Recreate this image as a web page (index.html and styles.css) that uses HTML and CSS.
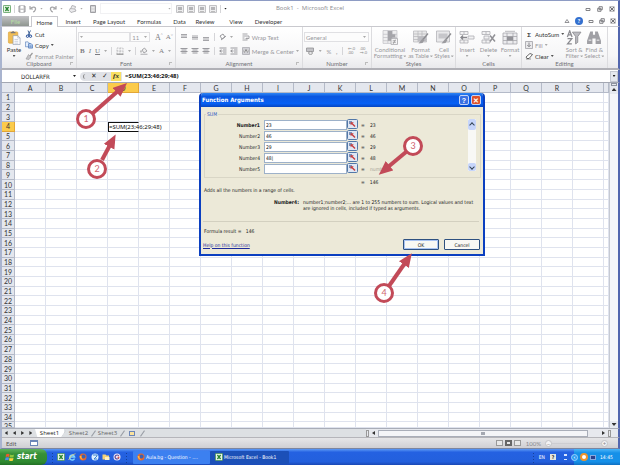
FILE: index.html
```html
<!DOCTYPE html>
<html lang="en">
<head>
<meta charset="utf-8">
<title>Book1 - Microsoft Excel</title>
<link rel="stylesheet" href="styles.css">
</head>
<body>
<svg class="sprite" aria-hidden="true">
  <symbol id="excel" viewBox="0 0 10 10"><rect x=".5" y=".5" width="9" height="9" rx="1" fill="#e9f6e6" stroke="#47934b"/><path d="M3 2.5l4 5M7 2.5l-4 5" stroke="#27832f" stroke-width="1.6"/></symbol>
  <symbol id="save" viewBox="0 0 8 8"><path d="M1 1h6v6H1z" fill="#c9c9cb" stroke="#96969a"/><path d="M2.5 1h3v2.500h-3zM2.500 5h3v2h-3z" fill="#fff"/></symbol>
  <symbol id="undo" viewBox="0 0 8 8"><path d="M1 1v3h3M1.500 3.500C4 1 7 2 6.500 4.500 6 6 5 7 4 7" fill="none" stroke="#a5a5a8" stroke-width="1.200"/></symbol>
  <symbol id="redo" viewBox="0 0 8 8"><path d="M7 1v3H4M6.500 3.500C4 1 1 2 1.500 4.500 2 6 3 7 4 7" fill="none" stroke="#a5a5a8" stroke-width="1.200"/></symbol>
  <symbol id="printer" viewBox="0 0 8 8"><path d="M2 3l1-2.500 3.500 1L6 3.500M1 3.500l5 .500 1 2-5 1.500-1.500-2z" fill="#ececee" stroke="#a5a5a8" stroke-width=".8"/></symbol>
  <symbol id="page" viewBox="0 0 8 8"><path d="M1.500.5h5v7h-5z" fill="#cfcfd2" stroke="#a0a0a4"/><path d="M2.500 2.500h3M2.500 4h3M2.500 5.500h3" stroke="#f4f4f4" stroke-width=".7"/></symbol>
  <symbol id="panes" viewBox="0 0 8 8"><path d="M.5.5h7v7h-7z" fill="#ededee" stroke="#c2c2c5"/><path d="M2 2h4v3H2z" fill="#b4b4b7"/><path d="M2 6.500h4" stroke="#bbb"/></symbol>
  <symbol id="paste" viewBox="0 0 14 16"><rect x="1" y="2" width="10" height="12" rx="1" fill="#f0bd55" stroke="#dba23d" stroke-width=".7"/><path d="M3.500 3.500V2h1.500q1-2 2 0h1.500v1.500z" fill="#78777a"/><path d="M6 6h5l2.500 2.500V15.500H6z" fill="#fff" stroke="#8e9bb0" stroke-width=".7"/><path d="M11 6v2.500h2.500M7.500 10h4M7.500 12h4M7.500 14h4" fill="none" stroke="#9eacc2" stroke-width=".6"/></symbol>
  <symbol id="cut" viewBox="0 0 8 8"><path d="M5.500.5L3 5.500M3 .5l2 5" stroke="#47689a" stroke-width="1" fill="none"/><circle cx="2.500" cy="6.200" r="1.200" fill="none" stroke="#254f9b"/><circle cx="5.500" cy="6.200" r="1.200" fill="none" stroke="#254f9b"/></symbol>
  <symbol id="copy" viewBox="0 0 9 8"><path d="M.5.5h3l1.500 1.500v4H.5z" fill="#e4eefc" stroke="#5179b5" stroke-width=".7"/><path d="M4 2.500h3l1.500 1.500v3.500H4z" fill="#c5daf6" stroke="#2b5ca8" stroke-width=".7"/><path d="M5 5h2.500M5 6.200h2.500" stroke="#2b5ca8" stroke-width=".6"/></symbol>
  <symbol id="brush" viewBox="0 0 8 8"><path d="M7.500 1L5 4" stroke="#999" stroke-width="1.200"/><path d="M3.500 2.500l2.500 2.500-2 2.500-3-.5z" fill="#c3c3c6" stroke="#98989b" stroke-width=".6"/></symbol>
  <symbol id="border" viewBox="0 0 8 8"><path d="M1 1h6v6H1zM4 1v6M1 4h6" fill="none" stroke="#aaaaae" stroke-width=".7" stroke-dasharray="1 .5"/><path d="M.5 7.200h7" stroke="#888"/></symbol>
  <symbol id="bucket" viewBox="0 0 8 8"><path d="M2 3l2.500-2 2.500 3-3 2z" fill="#eee" stroke="#929296" stroke-width=".8"/><path d="M1 3.500v2" stroke="#888"/><path d="M.5 7.300h7" stroke="#bdbdc0" stroke-width="1.300"/></symbol>
  <symbol id="lines" viewBox="0 0 8 8"><path d="M.5 1.500h7M1.500 3h5M.5 4.500h7M1.500 6h5" stroke="#8f8f94" stroke-width=".9"/></symbol>
  <symbol id="lines-top" viewBox="0 0 8 8"><path d="M1 1.500h6M1 3h6M1 4.500h6" stroke="#8f8f94" stroke-width=".8"/></symbol>
  <symbol id="lines-mid" viewBox="0 0 8 8"><path d="M1 3h6M1 4.500h6M1 6h6" stroke="#8f8f94" stroke-width=".8"/></symbol>
  <symbol id="lines-low" viewBox="0 0 8 8"><path d="M1 4.500h6M1 6h6M1 7.500h6" stroke="#8f8f94" stroke-width=".8"/></symbol>
  <symbol id="indent" viewBox="0 0 8 8"><path d="M.5 1h7M4 3h3.500M4 5h3.500M.5 7h7" stroke="#8f8f94" stroke-width=".9"/><path d="M3.500 4H1M2.200 2.500L.7 4l1.500 1.500" fill="none" stroke="#77777c" stroke-width=".8"/></symbol>
  <symbol id="rotate" viewBox="0 0 8 8"><path d="M1 3l3-2 2 3-3 2zM2 7l5-4" fill="none" stroke="#9a9a9e" stroke-width="1"/></symbol>
  <symbol id="wrap" viewBox="0 0 8 8"><path d="M.5 1h5M.5 3h6.500v2.500H4M.5 5h2M.5 7h5M5 4.500L4 5.500l1 1" fill="none" stroke="#9a9a9e" stroke-width=".9"/></symbol>
  <symbol id="merge" viewBox="0 0 8 8"><path d="M.5.5h7v7h-7zM.5 2h7M.5 6h7" fill="#ececee" stroke="#aaaab0" stroke-width=".8"/><path d="M2.500 5.500L4 2.500l1.500 3M1 4h1.500M5.500 4H7" fill="none" stroke="#777" stroke-width=".8"/></symbol>
  <symbol id="money" viewBox="0 0 8 8"><path d="M.5 1h7v3.500h-7z" fill="#c3c3c7" stroke="#929296" stroke-width=".8"/><ellipse cx="4.500" cy="6" rx="2" ry="1.500" fill="#e4e4e6" stroke="#888" stroke-width=".7"/></symbol>
  <symbol id="cond" viewBox="0 0 14 14"><path d="M.5.5h13v12H.5zM.5 4h13M.5 7h13M.5 10h13M5 .5v12M9 .5v12" fill="#efeff0" stroke="#c1c1c6" stroke-width=".7"/><path d="M5 1h4v3h3v3H9v3H5z" fill="#a5a5aa"/><path d="M8 8h6v5.500H8z" fill="#f6f6f7" stroke="#a4a4a8" stroke-width=".7"/><path d="M9.500 10h3M9.500 11.500h3M12 9l-2 4" stroke="#88888c" stroke-width=".6"/></symbol>
  <symbol id="fmt-table" viewBox="0 0 16 14"><path d="M.5.5h13v11H.5zM.5 3.500h13M.5 6h13M.5 9h13M5 .5v11M9 .5v11" fill="#e8e8e9" stroke="#b4b4b9" stroke-width=".7"/><path d="M5 6h8v5H5z" fill="#bcbcc1"/><path d="M15 3l-5 6" stroke="#8c8c90" stroke-width="1.300"/><path d="M9.500 8l2 1.500-2 3-4 .5z" fill="#9b9b9f"/></symbol>
  <symbol id="cell-style" viewBox="0 0 16 14"><path d="M.5.5h13v11H.5z" fill="#e9e9eb" stroke="#b4b4b9" stroke-width=".8"/><path d="M2.500 3h9v5h-9z" fill="#c6c6ca"/><path d="M15 3l-5 6" stroke="#8c8c90" stroke-width="1.300"/><path d="M9.500 8l2 1.500-2 3-4 .5z" fill="#9b9b9f"/></symbol>
  <symbol id="insert" viewBox="0 0 16 14"><path d="M1 1h8v3H1zM1 9.500h8v3H1zM5 1v3M5 9.500v3M9 5.500h6v3H9z" fill="#f2f2f3" stroke="#adadb2" stroke-width=".8"/><path d="M8 7H2M4 5L2 7l2 2" fill="none" stroke="#88888d" stroke-width="1.400"/></symbol>
  <symbol id="delete" viewBox="0 0 16 14"><path d="M1 1h8v3H1zM1 9.500h8v3H1zM5 1v3M5 9.500v3M3 5.500h5v3H3z" fill="#f2f2f3" stroke="#adadb2" stroke-width=".8"/><path d="M9 5l5 6M14 4l-5 7" stroke="#919196" stroke-width="1.500"/></symbol>
  <symbol id="format" viewBox="0 0 16 14"><path d="M1 2.500h14v11H1zM1 6h14M1 10h14M5 2.500v11M11 2.500v11M3 .8h10" fill="#ececee" stroke="#a7a7ac" stroke-width=".8"/><path d="M5 6h6v4H5z" fill="#929297"/></symbol>
  <symbol id="fill" viewBox="0 0 8 8"><path d="M.5.5h7v7h-7z" fill="#e9e9eb" stroke="#a2a2a7" stroke-width=".8"/><path d="M4 1.500v4M2.300 4L4 5.800 5.700 4" fill="none" stroke="#8a8a8f"/></symbol>
  <symbol id="eraser" viewBox="0 0 8 8"><path d="M1 5l4-3.500 2.500 1L4 6.500H2z" fill="#fff" stroke="#444" stroke-width=".8"/><path d="M1 7h5" stroke="#555" stroke-width=".6"/></symbol>
  <symbol id="sort" viewBox="0 0 14 14"><path d="M.8 6.500L3 .8l2.200 5.700M1.500 4.500h3M1 8h4L1 13h4" fill="none" stroke="#8b8b90" stroke-width="1.200"/><path d="M5.500 2h8L10.500 6v5.500l-2 1.500V6z" fill="#bdbdc2" stroke="#8b8b90" stroke-width=".8"/></symbol>
  <symbol id="find" viewBox="0 0 14 14"><path d="M3.500 1.500h2.500v3h2v-3h2.500l3 8.500v3H8.500V8h-3v5H.5v-3z" fill="#a0a0a5"/><path d="M2 9.500h2.500M9.500 9.500H12" stroke="#d7d7da" stroke-width="1.500"/></symbol>
  <symbol id="min" viewBox="0 0 6 6"><path d="M1 2.500h4v2H1z" fill="#fff" stroke="#77777c" stroke-width=".9"/></symbol>
  <symbol id="restore" viewBox="0 0 6 6"><path d="M2 .7h3.300v3H2zM.7 2.300H4v3H.7z" fill="#fff" stroke="#77777c" stroke-width=".9"/></symbol>
  <symbol id="close" viewBox="0 0 6 6"><path d="M.7.7h4.600v4.600H.7z" fill="#eee" stroke="#88888c" stroke-width=".6"/><path d="M1 1l4 4M5 1L1 5" stroke="#737378"/></symbol>
  <symbol id="caret-up" viewBox="0 0 6 6"><path d="M1 4.500l2-3 2 3z" fill="#fff" stroke="#77777c" stroke-width=".8"/></symbol>
  <symbol id="ref" viewBox="0 0 11 11"><rect x=".5" y=".5" width="10" height="9" rx="1" fill="#dfe7f4" stroke="#5278a8"/><path d="M2 2h3v3H2z" fill="#7c92b9"/><path d="M8 7.500L5 4.500" fill="none" stroke="#c83c3c" stroke-width="1.400"/><path d="M3.500 3.200h3.300L3.700 6.300z" fill="#c83c3c"/></symbol>
  <symbol id="win" viewBox="0 0 10 9"><path d="M1 1.500q2-1.500 3.500-.2L4 4Q2.500 3 .7 4z" fill="#ee5a30"/><path d="M5 1.500q2 1.200 4 0L8.500 4Q6.500 5 4.600 4z" fill="#8cc63f"/><path d="M.6 4.600Q2.500 3.700 4 4.600L3.500 7.300Q2 6.500 0 7.300z" fill="#4e8fea"/><path d="M4.500 4.700q2 1 4 0L8 7.500q-2 1-4 0z" fill="#fbd038"/></symbol>
  <symbol id="ie" viewBox="0 0 8 8"><path d="M6.500 5.500A2.500 2.500 0 1 1 6.600 4H2.500" fill="none" stroke="#7fd2ff" stroke-width="1.500"/><path d="M.5 7Q3 1 7.500.7" fill="none" stroke="#f6d86d" stroke-width=".7"/></symbol>
  <symbol id="fox" viewBox="0 0 8 8"><circle cx="4" cy="4" r="3.500" fill="#e8672a"/><circle cx="4.500" cy="3.500" r="2" fill="#3b62b4"/><path d="M.6 3q.5 4 4 3.800Q2 6 2.500 3z" fill="#ffb83e"/></symbol>
  <symbol id="globe" viewBox="0 0 8 8"><circle cx="4" cy="4" r="3.500" fill="#dbefff"/><path d="M2 2h4v1L3 6h3" fill="none" stroke="#3e83cf"/></symbol>
  <symbol id="folder" viewBox="0 0 8 8"><path d="M.5 1.500h3l1 1h2.500v4H.5z" fill="#f4d377"/><path d="M3 4h4.500v3H3z" fill="#fff1c0"/></symbol>
  <symbol id="chrome" viewBox="0 0 8 8"><circle cx="4" cy="4" r="3.500" fill="#eee9f8"/><path d="M5.800 3a2 2 0 1 0 0 2" fill="none" stroke="#5b4c9a" stroke-width="1.200"/><circle cx="5.500" cy="4.500" r="1" fill="#de5546"/></symbol>
</svg>

<div class="screen">
  <header class="titlebar">
    <svg class="i8"><use href="#excel"/></svg><i class="vbar"></i>
    <svg class="i8"><use href="#save"/></svg>
    <svg class="i8"><use href="#undo"/></svg><i class="dd"></i>
    <svg class="i8"><use href="#redo"/></svg><i class="dd"></i>
    <svg class="i8"><use href="#printer"/></svg><i class="dd"></i>
    <svg class="i8"><use href="#page"/></svg>
    <span class="quickbox"><i class="dd"></i></span>
    <svg class="i8"><use href="#panes"/></svg><svg class="i8"><use href="#panes"/></svg><svg class="i8"><use href="#panes"/></svg><svg class="i8"><use href="#panes"/></svg>
    <i class="vbar"></i><i class="dd dark"></i>
    <h1 class="wintitle">Book1 &nbsp;-&nbsp; Microsoft Excel</h1>
    <span class="winbtns"><svg class="i6"><use href="#min"/></svg><svg class="i6"><use href="#restore"/></svg><svg class="i6"><use href="#close"/></svg></span>
  </header>

  <nav class="tabs">
    <button class="tab file">File</button>
    <button class="tab home">Home</button>
    <button class="tab t-insert">Insert</button>
    <button class="tab t-page">Page Layout</button>
    <button class="tab t-form">Formulas</button>
    <button class="tab t-data">Data</button>
    <button class="tab t-review">Review</button>
    <button class="tab t-view">View</button>
    <button class="tab t-dev">Developer</button>
    <span class="docbtns"><svg class="i6"><use href="#caret-up"/></svg><b class="help">?</b><svg class="i6"><use href="#min"/></svg><svg class="i6"><use href="#restore"/></svg><svg class="i6"><use href="#close"/></svg></span>
  </nav>

  <section class="ribbon">
    <div class="group g-clip">
      <div class="tools">
        <button class="big live paste"><svg class="i16"><use href="#paste"/></svg>Paste<i class="dd"></i></button>
        <div class="stack">
          <button class="small live"><svg class="i8"><use href="#cut"/></svg>Cut</button>
          <button class="small live"><svg class="i8"><use href="#copy"/></svg>Copy<i class="dd"></i></button>
          <button class="small"><svg class="i8"><use href="#brush"/></svg>Format Painter</button>
        </div>
      </div>
      <div class="caption">Clipboard<i class="launch"></i></div>
    </div>
    <div class="group g-font">
      <div class="tools rows">
        <div class="line"><span class="combo face"><i class="dd"></i></span><span class="combo size">11<i class="dd"></i></span><span class="serif grow">A<sup>^</sup></span><span class="serif shrink">A<sup>˅</sup></span></div>
        <div class="line spread"><b class="serif">B</b><em class="serif">I</em><u class="serif">U</u><i class="dd"></i><i class="vbar"></i><svg class="i8"><use href="#border"/></svg><i class="dd"></i><i class="vbar"></i><svg class="i8"><use href="#bucket"/></svg><i class="dd"></i><span class="serif">A</span><i class="dd"></i></div>
      </div>
      <div class="caption">Font<i class="launch"></i></div>
    </div>
    <div class="group g-align">
      <div class="tools">
        <div class="rows alignset">
          <div class="line"><svg class="i8"><use href="#lines-top"/></svg><svg class="i8"><use href="#lines-mid"/></svg><svg class="i8"><use href="#lines-low"/></svg><i class="vbar"></i><svg class="i8"><use href="#rotate"/></svg><i class="dd"></i></div>
          <div class="line"><svg class="i8"><use href="#lines"/></svg><svg class="i8"><use href="#lines"/></svg><svg class="i8"><use href="#lines"/></svg><i class="vbar"></i><svg class="i8"><use href="#indent"/></svg><svg class="i8"><use href="#indent"/></svg></div>
        </div>
        <div class="rows wrapset">
          <button class="small"><svg class="i8"><use href="#wrap"/></svg>Wrap Text</button>
          <button class="small"><svg class="i8"><use href="#merge"/></svg>Merge &amp; Center<i class="dd"></i></button>
        </div>
      </div>
      <div class="caption">Alignment<i class="launch"></i></div>
    </div>
    <div class="group g-num">
      <div class="tools rows">
        <div class="line"><span class="combo general">General<i class="dd"></i></span></div>
        <div class="line spread"><svg class="i8"><use href="#money"/></svg><i class="dd"></i><span>%</span><b>,</b><i class="vbar"></i><span class="dec">←.0<br>.00</span><span class="dec">.00<br>→.0</span></div>
      </div>
      <div class="caption">Number<i class="launch"></i></div>
    </div>
    <div class="group g-styles">
      <div class="tools">
        <button class="big w32"><svg class="i16"><use href="#cond"/></svg>Conditional<span>Formatting<i class="dd"></i></span></button>
        <button class="big w25"><svg class="i16"><use href="#fmt-table"/></svg>Format<span>as Table<i class="dd"></i></span></button>
        <button class="big w20"><svg class="i16"><use href="#cell-style"/></svg>Cell<span>Styles<i class="dd"></i></span></button>
      </div>
      <div class="caption">Styles</div>
    </div>
    <div class="group g-cells">
      <div class="tools">
        <button class="big w20"><svg class="i16"><use href="#insert"/></svg>Insert<i class="dd"></i></button>
        <button class="big w20"><svg class="i16"><use href="#delete"/></svg>Delete<i class="dd"></i></button>
        <button class="big w20"><svg class="i16"><use href="#format"/></svg>Format<i class="dd"></i></button>
      </div>
      <div class="caption">Cells</div>
    </div>
    <div class="group g-edit">
      <div class="tools">
        <div class="stack">
          <button class="small live"><b class="sigma">Σ</b>AutoSum<i class="dd"></i></button>
          <button class="small"><svg class="i8"><use href="#fill"/></svg>Fill<i class="dd"></i></button>
          <button class="small live"><svg class="i8"><use href="#eraser"/></svg>Clear<i class="dd"></i></button>
        </div>
        <button class="big w20"><svg class="i16"><use href="#sort"/></svg>Sort &amp;<span>Filter<i class="dd"></i></span></button>
        <button class="big w20"><svg class="i16"><use href="#find"/></svg>Find &amp;<span>Select<i class="dd"></i></span></button>
      </div>
      <div class="caption">Editing</div>
    </div>
  </section>

  <div class="formulabar">
    <span class="namebox">DOLLARFR</span><i class="dd dark"></i>
    <span class="fxset"><i class="grip"></i><button class="fxb">✕</button><button class="fxb">✓</button><button class="fxb fx">fx</button></span>
    <input class="formula" aria-label="Formula" value="=SUM(23;46;29;48)">
    <button class="expand" aria-label="Expand formula bar"><i class="dd dark"></i></button>
  </div>

  <main class="sheetwrap">
    <table class="sheet" id="sheet"></table>
    <div class="vscroll"><i class="split"></i><i class="arrow up"></i><i class="track"></i><i class="arrow down"></i></div>

    <section class="dialog" role="dialog" aria-label="Function Arguments">
      <div class="dlg-title"><h2>Function Arguments</h2><button class="dlg-help">?</button><button class="dlg-close">✕</button></div>
      <div class="dlg-body">
        <fieldset class="args">
          <legend>SUM</legend>
          <div class="arglist">
            <label class="strong" for="n1">Number1</label><input id="n1" value="23"><button aria-label="Select range"><svg><use href="#ref"/></svg></button><span>=</span><span>23</span>
            <label for="n2">Number2</label><input id="n2" value="46"><button aria-label="Select range"><svg><use href="#ref"/></svg></button><span>=</span><span>46</span>
            <label for="n3">Number3</label><input id="n3" value="29"><button aria-label="Select range"><svg><use href="#ref"/></svg></button><span>=</span><span>29</span>
            <label for="n4">Number4</label><input id="n4" value="48|"><button aria-label="Select range"><svg><use href="#ref"/></svg></button><span>=</span><span>48</span>
            <label for="n5">Number5</label><input id="n5" value=""><button aria-label="Select range"><svg><use href="#ref"/></svg></button><span>=</span><span class="dim">number</span>
          </div>
          <div class="argscroll"><i class="chev"></i><i class="chev down"></i></div>
        </fieldset>
        <div class="total"><span>=</span><span>146</span></div>
        <p class="desc">Adds all the numbers in a range of cells.</p>
        <div class="argdesc"><b>Number4:</b><p>number1;number2;... are 1 to 255 numbers to sum. Logical values and text are ignored in cells, included if typed as arguments.</p></div>
        <p class="result">Formula result = &nbsp; 146</p>
        <div class="dlg-foot"><a href="#">Help on this function</a><button class="xp ok">OK</button><button class="xp">Cancel</button></div>
      </div>
    </section>
  </main>

  <div class="sheettabs">
    <span class="navs"><i class="nv l"></i><i class="nv l"></i><i class="nv"></i><i class="nv"></i></span>
    <button class="st on">Sheet1</button><button class="st">Sheet2</button><button class="st">Sheet3</button><span class="st new"><i></i></span>
    <div class="hscroll"><i class="split"></i><i class="nv l"></i><span class="thumb"><i></i></span><i class="nv"></i><i class="split"></i></div>
  </div>

  <footer class="status">
    <span class="mode">Edit</span><i class="rec"></i>
    <span class="views"><i></i><i class="on"></i><i></i></span><span class="zoomtxt">100%</span><i class="round">−</i><i class="rail"></i><i class="round">+</i><i class="corner"></i>
  </footer>

  <div class="taskbar">
    <button class="start"><svg><use href="#win"/></svg>start</button>
    <i class="dots"></i>
    <span class="quick"><svg class="i8"><use href="#excel"/></svg><svg class="i8"><use href="#ie"/></svg><svg class="i8"><use href="#fox"/></svg><svg class="i8"><use href="#globe"/></svg><svg class="i8"><use href="#folder"/></svg><svg class="i8"><use href="#chrome"/></svg></span>
    <i class="dots"></i>
    <button class="task"><svg class="i8"><use href="#fox"/></svg>Aula.bg - Question - ....</button>
    <button class="task active"><svg class="i8"><use href="#excel"/></svg>Microsoft Excel - Book1</button>
    <i class="dots push"></i>
    <span class="lang">EN</span><b class="kbd">?</b><i class="mini"></i>
    <span class="tray"><b class="back">‹</b><i class="orb"></i><i class="net"></i><span>14:45</span></span>
  </div>

  <svg class="callouts" width="620" height="465" viewBox="0 0 620 465">
    <defs><marker id="head" markerUnits="userSpaceOnUse" markerWidth="16" markerHeight="14" refX="2" refY="6" orient="auto"><path d="M0 0L14 6 0 12z" fill="#c24a58"/></marker></defs>
    <g class="arrows"><path d="M93 113L118 91"/><path d="M102 160L110 145"/><path d="M406 152L388 167"/><path d="M389 286L405 263"/></g>
    <g class="rings"><circle cx="86" cy="119" r="8.500"/><circle cx="97" cy="169" r="8.500"/><circle cx="413" cy="146" r="8.500"/><circle cx="384" cy="293" r="8.500"/></g>
    <g class="nums"><text x="86" y="122">1</text><text x="97" y="172">2</text><text x="413" y="149">3</text><text x="384" y="296">4</text></g>
  </svg>
</div>
<script src="sheet.js"></script>
</body>
</html>
```
FILE: styles.css
```css
* { box-sizing: border-box; }
body { margin: 0; font: 6px/7px Lato, "Noto Sans", sans-serif; color: #333; background: #fff; overflow: hidden; }
button, input { font: inherit; color: inherit; margin: 0; padding: 0; border: 0; background: none; min-width: 0; }
h1, h2, p { margin: 0; font: inherit; }
i { display: block; flex: none; }
svg { flex: none; display: block; }
.sprite { position: absolute; width: 0; height: 0; }
.screen { position: relative; height: 100vh; display: flex; flex-direction: column; }
.screen > * { flex: none; }
.titlebar, .tabs, .ribbon, .formulabar, .sheetwrap, .sheettabs, .status { border-left: 2px solid #a9b4cf; border-right: 2px solid #5266ae; }
.i6 { width: 6px; height: 6px; }
.i8 { width: 8px; height: 8px; }
.i16 { width: 16px; height: 15px; }
.dd { width: 3px; height: 2px; background: #aaa; clip-path: polygon(0 0, 100% 0, 50% 100%); display: inline-block; }
.live .dd { background: #555; }
.dd.dark { background: #222; }
.vbar { width: 1px; height: 8px; background: #d5d5d8; }

.titlebar { position: relative; height: 16px; display: flex; align-items: center; gap: 3px; padding-left: 1px; border-top: 1px solid #8e9cc4; }
.titlebar .dd { margin-right: 3px; }
.quickbox { width: 72px; height: 11px; border: 1px solid #f1f1f3; display: flex; align-items: center; justify-content: flex-end; margin-right: 1px; }
.quickbox .dd { margin: 0; }
.wintitle { position: absolute; left: 0; right: 0; text-align: center; color: #8b8b90; font-family: "Open Sans", sans-serif; }
.winbtns, .docbtns { margin-left: auto; display: flex; align-items: center; gap: 6px; padding-right: 3px; }

.tabs { height: 10px; display: flex; align-items: stretch; }
.tab { color: #333; text-align: center; }
.file { width: 27px; background: linear-gradient(#c2c2c5, #8f9690); color: #b4dfa0; }
.home { width: 27px; margin: 0 0 -1px 2px; border: 1px solid #c9c9ce; border-bottom: 0; background: #fff; position: relative; z-index: 1; }
.t-insert { width: 30px; } .t-page { width: 42px; } .t-form { width: 38px; } .t-data { width: 23px; }
.t-review { width: 28px; } .t-view { width: 34px; } .t-dev { width: 31px; }
.docbtns { gap: 5px; padding-right: 2px; }
.help { width: 8px; height: 8px; border-radius: 50%; background: #3470cf; color: #fff; text-align: center; line-height: 8px; }

.ribbon { height: 44px; display: flex; border-top: 1px solid #c9c9ce; border-bottom: 2px solid #b0b0b6; background: linear-gradient(#fff, #f6f6f7 70%, #e9e9ec); color: #98989c; }
.group { border-right: 1px solid #dcdcdf; display: flex; flex-direction: column; min-width: 0; }
.g-clip { width: 75px; } .g-font { width: 99px; } .g-align { width: 127px; } .g-num { width: 69px; }
.g-styles { width: 84px; } .g-cells { width: 66px; } .g-edit { width: 86px; }
.tools { flex: 1; display: flex; padding: 3px 3px 0; }
.caption { position: relative; height: 8px; text-align: center; color: #707075; }
.launch { position: absolute; right: 3px; top: 2px; width: 3px; height: 3px; border-left: 1px solid #bbb; border-top: 1px solid #bbb; }
.big { flex: none; display: flex; flex-direction: column; align-items: center; line-height: 6px; white-space: nowrap; }
.big svg { margin-bottom: 2px; }
.big > .dd { margin-top: 2px; }
.big .dd { vertical-align: middle; }
.big span .dd { margin-left: 1px; }
.paste { width: 18px; margin-right: 2px; }
.w32 { width: 34px; } .w25 { width: 24px; } .w20 { width: 20px; }
.g-styles .tools, .g-cells .tools { padding-left: 1px; padding-right: 1px; justify-content: space-between; }
.g-edit .tools { justify-content: space-between; }
.live { color: #333; }
.stack { display: flex; flex-direction: column; gap: 3px; }
.small { display: flex; align-items: center; gap: 2px; height: 8px; white-space: nowrap; }
.sigma { width: 8px; text-align: center; color: #222; }
.rows { display: flex; flex-direction: column; gap: 4px; }
.tools.rows { padding: 5px 2px 0 1px; }
.line { display: flex; align-items: center; gap: 3px; height: 10px; }
.spread { justify-content: space-between; padding: 0 2px; }
.serif { font-family: "Liberation Serif", serif; font-size: 7px; color: #7c7c82; }
.grow { font-size: 8px; margin-left: 2px; }
sup { font-size: 4px; line-height: 0; }
.combo { height: 10px; border: 1px solid #e0e0e3; background: #fcfcfc; display: flex; align-items: center; justify-content: space-between; padding: 0 2px 0 1px; }
.face { width: 53px; } .size { width: 20px; margin-left: -3px; } .general { width: 65px; }
.alignset { width: 63px; padding-top: 2px; }
.g-align .tools { padding-left: 4px; }
.wrapset { padding: 3px 0 0 2px; gap: 6px; }
.alignset .vbar { margin: 0 1px; }
.dec { font-size: 4px; line-height: 4px; color: #888; }

.formulabar { height: 13px; display: flex; align-items: center; border-bottom: 1px solid #a3a7b2; font-family: "DejaVu Sans Condensed", "DejaVu Sans", sans-serif; color: #222; }
.namebox { width: 71px; padding-left: 19px; }
.fxset { display: flex; align-items: center; width: 42px; height: 9px; margin-left: 4px; background: #e0e2e7; border-radius: 5px 0 0 5px; padding-left: 3px; gap: 1px; }
.grip { width: 5px; height: 5px; border-left: 1px solid #888; border-radius: 3px; }
.fxb { width: 10px; height: 9px; line-height: 9px; font-size: 7px; }
.fx { background: #f9e063; font-family: "Liberation Serif", serif; font-style: italic; font-weight: bold; }
.formula { flex: 1; height: 9px; padding-left: 3px; font-family: "Open Sans", sans-serif; font-weight: bold; color: #111; }
.expand { width: 8px; height: 11px; border: 1px solid #c5c9d2; background: #e5e8ee; display: flex; align-items: center; justify-content: center; }

.screen > .sheetwrap { position: relative; flex: 1 1 0; min-height: 0; display: flex; }
.sheet { flex: 1; min-width: 0; display: grid; grid-template-columns: 13px repeat(19, minmax(0, 31fr)) minmax(0, 5fr); grid-template-rows: 10px repeat(34, minmax(0, 29fr)) minmax(0, 17fr); overflow: hidden; }
.sheet tbody, .sheet tr { display: contents; }
.sheet th, .sheet td { padding: 0; min-width: 0; min-height: 0; border-right: 1px solid #dfe3ee; border-bottom: 1px solid #dfe3ee; }
.sheet th { display: flex; align-items: center; justify-content: center; font-weight: normal; font-size: 7px; line-height: 8px; color: #333; background: #e4e7ee; border-color: #b4bac8; overflow: hidden; }
.sheet tr:last-child th { align-items: flex-start; }
.sheet th.sel { background: #fbcb4b; border-color: #e2a637; }
.sheet td.cur { position: relative; border: 1px solid #111; border-right-color: #dfe3ee; white-space: nowrap; font: 6px/8px "Noto Sans", sans-serif; color: #111; display: flex; align-items: center; }
.vscroll { width: 9px; display: flex; flex-direction: column; align-items: center; background: #e6e9ef; border-left: 1px solid #c5c9d2; }
.vscroll .split { width: 6px; height: 3px; border: 1px solid #8d93a0; }
.arrow { width: 5px; height: 3px; margin: 2px 0 3px; background: #333; clip-path: polygon(50% 0, 100% 100%, 0 100%); }
.arrow.down { clip-path: polygon(0 0, 100% 0, 50% 100%); margin: 2px 0; }
.track { flex: 1; width: 8px; background: #f5f6f9; }

.dialog { position: absolute; left: 197px; top: 10px; width: 286px; border: 2px solid #0b3fc0; border-top: 0; border-radius: 4px 4px 0 0; background: #ece9d8; overflow: hidden; font: 5px/6px "DejaVu Sans Condensed", "DejaVu Sans", sans-serif; color: #222; }
.dlg-title { height: 14px; display: flex; align-items: center; gap: 2px; padding: 0 2px 0 1px; background: linear-gradient(#2f86f5, #0b57e0 25%, #0660f4 75%, #0645c0); }
.dlg-title h2 { flex: 1; color: #fff; font: bold 6px/8px "DejaVu Sans Condensed", "DejaVu Sans", sans-serif; }
.dlg-title button { width: 10px; height: 10px; border: 1px solid #c4d4f8; border-radius: 2px; background: #3a6fe2; color: #fff; font: bold 7px/7px "Liberation Sans", sans-serif; }
.dlg-title .dlg-close { background: #e0522c; }
.dlg-body { padding: 4px 2px 4px; }
.args { position: relative; margin: 0 0 0 1px; padding: 2px 4px 2px 0; border: 1px solid #d9d6c6; display: flex; justify-content: space-between; min-width: 0; }
.args legend { padding: 0 1px; margin-left: 1px; color: #2a55c0; }
.arglist { display: grid; grid-template-columns: 55px 87px 11px 9px 40px; grid-auto-rows: 11px; align-items: center; padding-bottom: 1px; }
.arglist label { text-align: right; }
.arglist .strong { font-weight: bold; }
.arglist input { height: 10px; margin-left: 4px; padding-left: 1px; background: #fff; border: 1px solid #9db1c9; color: #111; }
.arglist button { width: 11px; height: 11px; }
.arglist button svg { width: 11px; height: 11px; }
.arglist span { padding-left: 3px; }
.arglist .dim { color: #a5a295; }
.argscroll { width: 8px; margin: 0 0 4px; background: #f8f8f6; display: flex; flex-direction: column; justify-content: space-between; }
.chev { width: 8px; height: 11px; border-radius: 2px; background: #c6d5fb; display: flex; justify-content: center; align-items: center; }
.chev::before { content: ""; width: 3px; height: 3px; margin-top: 1px; border: solid #345; border-width: 1px 0 0 1px; transform: rotate(45deg); }
.chev.down { height: 8px; }
.chev.down::before { transform: rotate(225deg); margin: -1px 0 0; }
.total { display: flex; gap: 5px; padding: 1px 0 1px 158px; }
.desc { padding: 1px 0 6px 1px; }
.argdesc { display: flex; gap: 4px; padding-bottom: 10px; }
.argdesc b { width: 96px; text-align: right; flex: none; }
.argdesc p { flex: 1; }
.result { border-top: 1px solid #d3d0c0; padding: 6px 0 5px 1px; margin-right: 2px; }
.dlg-foot { display: flex; align-items: center; gap: 5px; padding-right: 1px; }
.dlg-foot a { margin-right: auto; color: #1d2a9c; }
.xp { width: 36px; height: 11px; border: 1px solid #2e5180; border-radius: 1px; background: #f8f8f4; }
.xp.ok { box-shadow: inset 0 0 0 1px #a9c3f2; }

.sheettabs { height: 9px; display: flex; align-items: stretch; background: #dde0e3; border-top: 1px solid #a9adb8; }
.navs { width: 33px; display: flex; align-items: center; justify-content: space-around; }
.nv { width: 3px; height: 4px; background: #333; clip-path: polygon(0 0, 100% 50%, 0 100%); align-self: center; }
.nv.l { clip-path: polygon(100% 0, 100% 100%, 0 50%); }
.st { position: relative; width: 29px; color: #666; font-family: "Open Sans", sans-serif; }
.st::after { content: ""; position: absolute; right: -1px; top: 1px; width: 1px; height: 7px; background: #9a9ea6; transform: rotate(35deg); }
.st.on { background: #fff; color: #222; clip-path: polygon(0 0, 110% 0, 90% 100%, 8% 100%); }
.st.new { width: 20px; display: flex; align-items: center; justify-content: center; }
.st.new i { width: 6px; height: 5px; border: 1px solid #6c86b8; background: #fbe29c; }
.hscroll { margin-left: auto; width: 252px; display: flex; align-items: center; gap: 3px; background: #e7e9ee; padding-right: 7px; }
.hscroll .split { width: 3px; height: 7px; border: 1px solid #999; }
.thumb { flex: 1; height: 7px; border: 1px solid #a9aeb9; background: #f4f5f8; display: flex; align-items: center; justify-content: center; margin-right: 11px; }
.thumb i { width: 4px; height: 3px; background: #a5a9b2; }

.status { height: 12px; display: flex; align-items: center; background: linear-gradient(#e6e6e8, #cfcfd3); border-top: 1px solid #b5b5ba; border-bottom: 1px solid #7b85a0; color: #555; }
.mode { width: 25px; padding-left: 4px; }
.rec { width: 8px; height: 6px; margin-left: 3px; border: 1px solid #6c86b8; border-top-width: 2px; background: #fff; }
.views { margin-left: auto; display: flex; gap: 2px; margin-right: 5px; }
.views i { width: 7px; height: 6px; border: 1px solid #999; background: #e8e8e8; }
.views .on { border-color: #666; border-width: 2px; }
.zoomtxt { color: #88888e; margin-right: 4px; }
.round { width: 7px; height: 7px; border-radius: 50%; border: 1px solid #c2c2c6; background: #f3f3f4; font-style: normal; text-align: center; line-height: 5px; color: #888; }
.rail { width: 49px; height: 1px; background: #cdcdd1; }
.corner { width: 10px; }

.taskbar { height: 16px; display: flex; align-items: center; background: linear-gradient(#5d9af5, #2461e2 20%, #2360dd 80%, #1a48b4); color: #fff; font: 5px/7px "DejaVu Sans Condensed", "DejaVu Sans", sans-serif; }
.start { width: 47px; height: 16px; display: flex; align-items: center; gap: 2px; padding-left: 5px; background: linear-gradient(#5cb35d, #379038 30%, #2f8a30 80%, #226f24); border-radius: 0 6px 6px 0; font: italic bold 8px/10px "DejaVu Sans Condensed", sans-serif; color: #fff; }
.start svg { width: 10px; height: 9px; }
.dots { width: 3px; height: 11px; margin-left: 4px; background: radial-gradient(circle, #164099 1px, transparent 1px) 0 0 / 3px 3px; }
.quick { display: flex; margin-left: 3px; width: 71px; justify-content: space-between; padding-right: 7px; }
.quick + .dots { margin: 0 3px 0 -3px; }
.task { width: 77px; height: 13px; margin: 0 0 0 2px; display: flex; align-items: center; gap: 1px; padding-left: 4px; background: #3c80f0; border-radius: 1px; white-space: nowrap; overflow: hidden; }
.task.active { width: 79px; margin-left: 0; padding-left: 5px; background: #1c50b8; }
.push { margin-left: auto; }
.lang { margin: 0 5px 0 4px; }
.kbd { width: 6px; height: 6px; background: #e5e5de; color: #222; line-height: 6px; text-align: center; }
.mini { width: 3px; height: 6px; margin: 0 7px 0 8px; border-top: 2px solid #d9e6ff; border-bottom: 1px solid #d9e6ff; }
.tray { width: 46px; height: 16px; display: flex; align-items: center; gap: 2px; background: linear-gradient(#4db5f8, #1590e8 25%, #1590e8 80%, #0f6fc0); }
.back { width: 7px; height: 7px; margin-left: -3px; border-radius: 50%; background: #2f9df2; border: 1px solid #9bd4ff; text-align: center; line-height: 4px; }
.orb { width: 8px; height: 8px; border-radius: 50%; background: #fff; border: 2px solid #ee942b; }
.net { width: 6px; height: 5px; background: #2b3f8c; border: 1px solid #89a9dd; margin-right: 2px; }

.callouts { position: absolute; left: 0; top: 0; pointer-events: none; }
.arrows path { stroke: #c24a58; stroke-width: 4; marker-end: url(#head); }
.rings circle { fill: #fff; stroke: #c24a58; stroke-width: 3; }
.nums text { font: 9px Lato, sans-serif; fill: #cf6470; text-anchor: middle; }
```
FILE: sheet.js
```js
const columns = "ABCDEFGHIJKLMNOPQRS".split("").concat("");
const active = { row: 4, column: "D", text: "=SUM(23;46;29;48)" };

const table = document.getElementById("sheet");
const body = table.createTBody();

function heading(row, text, selected) {
  const th = document.createElement("th");
  th.textContent = text;
  if (selected) th.className = "sel";
  row.append(th);
}

const top_ = body.insertRow();
heading(top_, "", false);
columns.forEach(c => heading(top_, c, c === active.column));

for (let r = 1; r <= 35; r++) {
  const row = body.insertRow();
  heading(row, r, r === active.row);
  columns.forEach(c => {
    const cell = row.insertCell();
    if (r === active.row && c === active.column) {
      cell.className = "cur";
      cell.textContent = active.text;
    }
  });
}
```
